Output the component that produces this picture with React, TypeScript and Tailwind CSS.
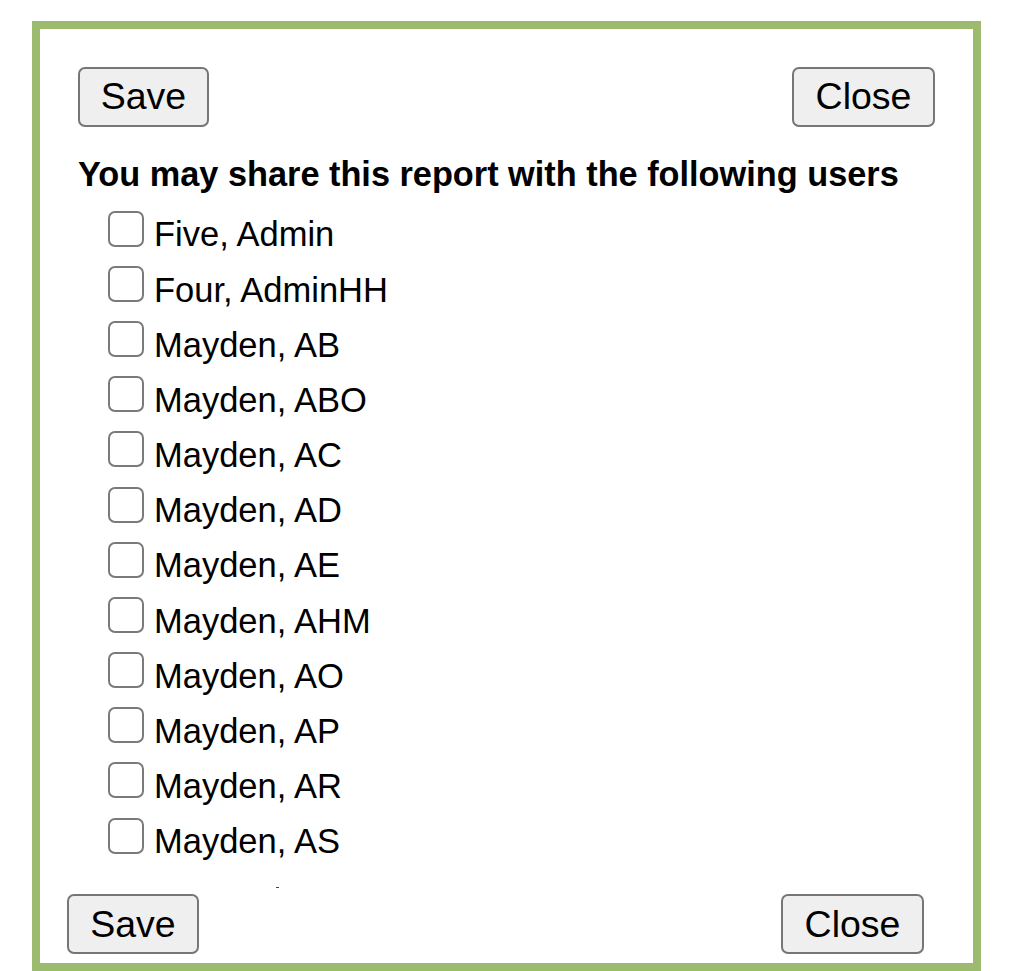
const users = [
  "Five, Admin",
  "Four, AdminHH",
  "Mayden, AB",
  "Mayden, ABO",
  "Mayden, AC",
  "Mayden, AD",
  "Mayden, AE",
  "Mayden, AHM",
  "Mayden, AO",
  "Mayden, AP",
  "Mayden, AR",
  "Mayden, AS",
];

const btn =
  "h-[60px] rounded-[7px] border-2 border-[#767676] bg-[#efefef] text-[37.5px] leading-none text-black flex items-center justify-center";

const App = () => {
  return (
    <div className="min-h-[971px] bg-white font-['Liberation_Sans',Arial,sans-serif] pt-[21px] pl-[32px]">
      <div className="w-[949px] h-[950px] border-[8px] border-[#9dbb6f] bg-white flex flex-col">
        <div className="flex justify-between px-[38px] pt-[38px]">
          <button className={btn + " w-[131px]"}>Save</button>
          <button className={btn + " w-[143px]"}>Close</button>
        </div>
        <h2 className="mt-[28px] pl-[38px] text-[34.3px] leading-[39px] font-bold text-black">
          You may share this report with the following users
        </h2>
        <ul className="mt-[13px] pl-[68px]">
          {users.map((u) => (
            <li key={u} className="h-[55.2px] flex items-center">
              <span className="mb-[12px] w-[36px] h-[36px] rounded-[7px] border-2 border-[#7a7a7a] bg-white shrink-0" />
              <span className="ml-[10px] text-[34.5px] leading-none text-black">{u}</span>
            </li>
          ))}
        </ul>
        <div className="mt-[18px] ml-[236px] w-[3px] h-[1px] bg-[#444]" />
        <div className="mt-[6px] flex justify-between pl-[27px] pr-[49px]">
          <button className={btn + " w-[132px] h-[59px]"}>Save</button>
          <button className={btn + " w-[143px] h-[59px]"}>Close</button>
        </div>
      </div>
    </div>
  );
};

export default App;
